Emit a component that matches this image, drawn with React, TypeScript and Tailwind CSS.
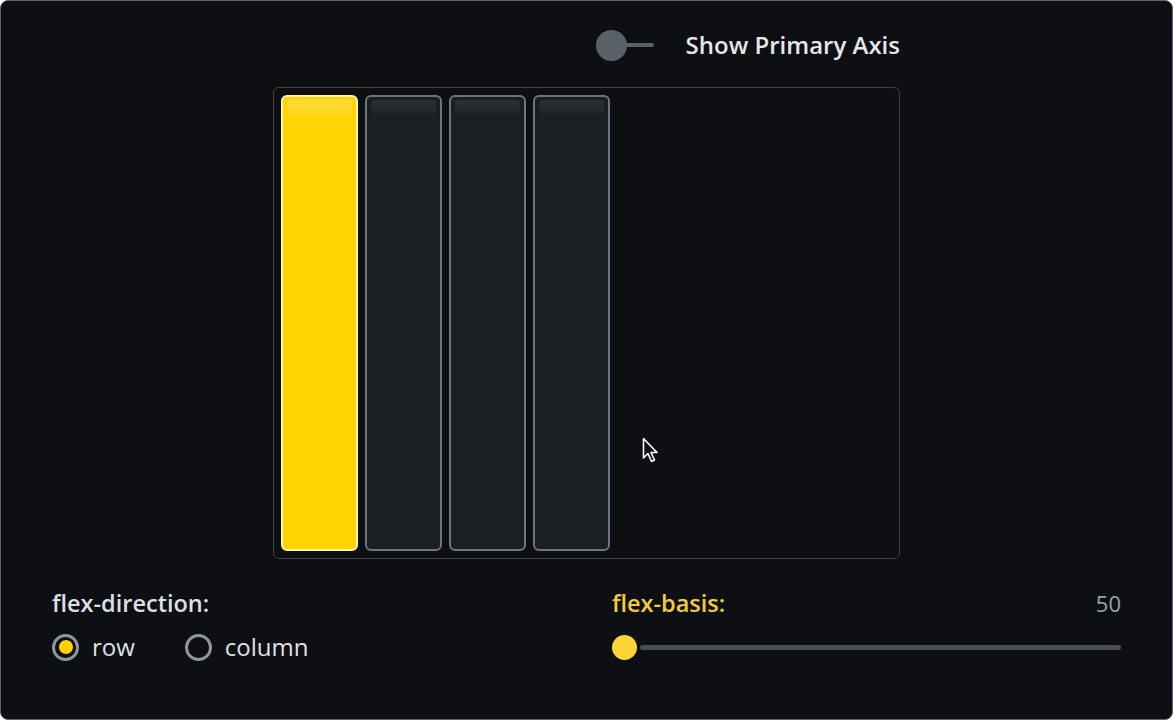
import React from 'react';

function Item({ active }: { active?: boolean }) {
  return (
    <div
      className={
        'relative w-[77px] h-full rounded-[6px] border-2 ' +
        (active ? 'bg-[#ffd400] border-[#fff2b3]' : 'bg-[#1b1f23] border-[#6d757c]')
      }
    >
      <div
        className={
          'absolute left-[4px] right-[4px] top-[3px] h-[18px] rounded-[4px] bg-gradient-to-b ' +
          (active ? 'from-[#ffdc3a] to-[#ffd400]' : 'from-[#2d3136] to-[#1b1f23]')
        }
      />
    </div>
  );
}

function Radio({ checked, label }: { checked?: boolean; label: string }) {
  return (
    <div className="flex items-center gap-[13px]">
      <div className="w-[27px] h-[27px] rounded-full border-[3px] border-[#8d959e] flex items-center justify-center">
        {checked && <div className="w-[14px] h-[14px] rounded-full bg-[#ffd400]" />}
      </div>
      <span className="text-[24px] leading-[30px] text-[#dfe2e6]">{label}</span>
    </div>
  );
}

export default function App() {
  return (
    <div
      className="relative w-[1173px] h-[720px] bg-[#0d0f13] rounded-[8px] border border-[#5c636b] flex flex-col overflow-hidden"
      style={{ fontFamily: '"Open Sans", "Noto Sans", sans-serif' }}
    >
      <div className="w-[627px] mx-auto flex flex-col mt-[28px]">
        <div className="flex items-center justify-end h-[32px]">
          <div className="relative w-[58px] h-[31px] flex items-center">
            <div className="absolute left-[20px] right-0 h-[4px] rounded-full bg-[#5a6068]" />
            <div className="absolute left-0 w-[31px] h-[31px] rounded-full bg-[#5a6068]" />
          </div>
          <span className="ml-[32px] text-[24px] leading-[32px] font-semibold text-[#e6e7e9]">Show Primary Axis</span>
        </div>
        <div className="mt-[26px] h-[472px] rounded-[6px] border border-[#3e434a] p-[7px] flex gap-[7px]">
          <Item active />
          <Item />
          <Item />
          <Item />
        </div>
      </div>

      <div className="grid grid-cols-2 gap-[51px] px-[51px] mt-[29px]">
        <div className="flex flex-col">
          <span className="text-[23.5px] font-semibold text-[#dcdfe3] leading-[30px]">flex-direction:</span>
          <div className="flex items-center gap-[50px] mt-[14px]">
            <Radio checked label="row" />
            <Radio label="column" />
          </div>
        </div>
        <div className="flex flex-col">
          <div className="flex items-center justify-between leading-[30px]">
            <span className="text-[23.5px] font-semibold text-[#f4cc35]">flex-basis:</span>
            <span className="text-[22px] text-[#9aa2ab]">50</span>
          </div>
          <div className="relative h-[28px] mt-[15px] flex items-center">
            <div className="absolute left-[28px] right-0 h-[5px] rounded-full bg-[#484d54]" />
            <div className="absolute left-0 w-[25px] h-[25px] rounded-full bg-[#fdd633]" />
          </div>
        </div>
      </div>

      <svg className="absolute left-[641px] top-[436px]" width="20" height="30" viewBox="0 0 20 30">
        <path d="M1.5 1.5 L1.5 21 L6 16.5 L9.5 24.5 L12.5 23 L9 15.5 L15 15.5 Z" fill="#0d0f13" stroke="#ffffff" strokeWidth="1.6" strokeLinejoin="round" />
      </svg>
    </div>
  );
}
